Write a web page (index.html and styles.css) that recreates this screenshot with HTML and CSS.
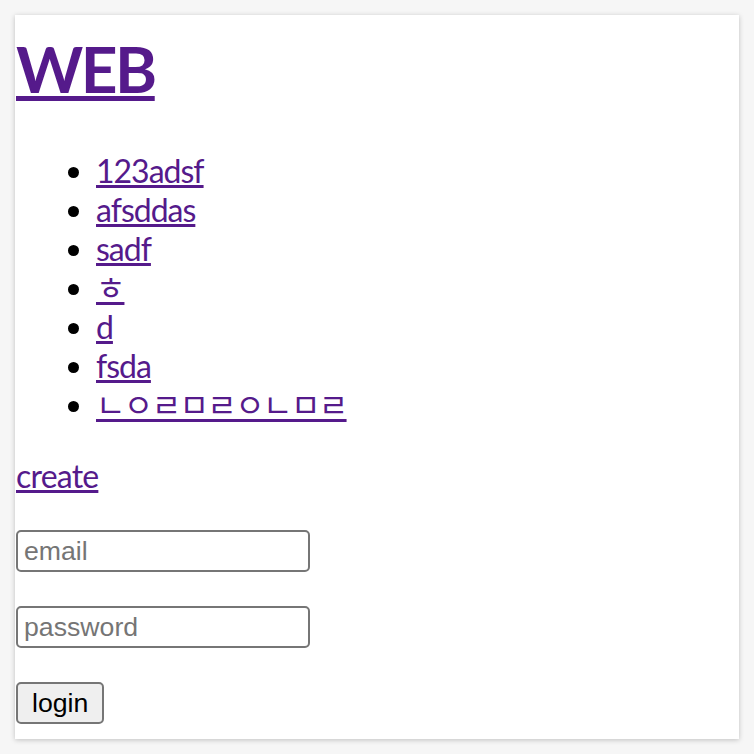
FILE: index.html
```html
<!DOCTYPE html>
<html lang="ko">
<head>
  <meta charset="UTF-8">
  <meta name="viewport" content="width=device-width, initial-scale=1.0">
  <title>WEB</title>
  <link rel="stylesheet" href="styles.css">
</head>
<body>
  <div class="window">
    <h1><a href="/">WEB</a></h1>
    <ul class="topics">
      <li><a href="#">123adsf</a></li>
      <li><a href="#">afsddas</a></li>
      <li><a href="#">sadf</a></li>
      <li><a href="#">ㅎ</a></li>
      <li><a href="#">d</a></li>
      <li><a href="#">fsda</a></li>
      <li><a href="#" class="jamo">ㄴㅇㄹㅁㄹㅇㄴㅁㄹ</a></li>
    </ul>
    <p class="create"><a href="#">create</a></p>
    <form class="login">
      <p><input type="text" name="email" placeholder="email"></p>
      <p><input type="password" name="pwd" placeholder="password"></p>
      <p><input type="submit" value="login"></p>
    </form>
  </div>
</body>
</html>
```

FILE: styles.css
```css
body {
  margin: 0;
  padding: 15px;
  background: #f6f6f6;
  font-family: Lato, "Noto Sans CJK KR", sans-serif;
}
.window {
  box-sizing: border-box;
  width: 724px;
  height: 724px;
  padding: 16px 1px 0;
  background: #fff;
  box-shadow: 0 1px 5px rgba(0,0,0,0.22);
  overflow: hidden;
}
a {
  color: #551a8b;
}
h1 {
  margin: 0;
  font-size: 64px;
  line-height: 76px;
  font-weight: bold;
  letter-spacing: -2.5px;
}
h1 a {
  text-decoration-thickness: 5px;
}
.topics {
  margin: 44px 0 0;
  padding-left: 80px;
  font-size: 32px;
  line-height: 39px;
  letter-spacing: -1px;
}
.topics a {
  text-decoration-thickness: 2.5px;
}
.topics .jamo {
  letter-spacing: -1.6px;
}
.create {
  margin: 32px 0 0;
  font-size: 32px;
  line-height: 39px;
  letter-spacing: -0.8px;
}
.create a {
  text-decoration-thickness: 2.5px;
}
.login p {
  margin: 34px 0 0;
}
.login p:first-child {
  margin-top: 35px;
}
.login input {
  font-family: "Liberation Sans", Arial, sans-serif;
  font-size: 26.67px;
}
.login input[type=text],
.login input[type=password] {
  box-sizing: border-box;
  width: 294px;
  height: 42px;
  padding: 2px 6px;
  border: 2px solid #767676;
  border-radius: 5px;
}
.login input::placeholder {
  color: #757575;
}
.login input[type=submit] {
  box-sizing: border-box;
  height: 42px;
  padding: 0 14px;
  color: #000;
  background: #efefef;
  border: 2px solid #767676;
  border-radius: 5px;
}
```
